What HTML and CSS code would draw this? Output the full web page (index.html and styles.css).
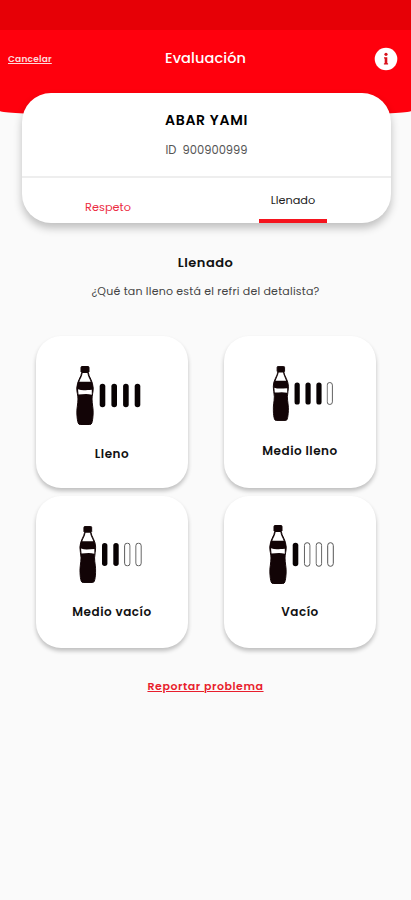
FILE: index.html
```html
<!DOCTYPE html>
<html lang="es">
<head>
    <meta charset="UTF-8">
    <meta name="viewport" content="width=device-width, initial-scale=1.0">
    <title>Evaluación</title>
    <link rel="stylesheet" href="styles.css">
</head>
<body>
    <!-- Shared icon shapes -->
    <svg class="sprite" width="0" height="0">
        <symbol id="bottle" viewBox="0 0 18 59">
            <path d="M5 1.5Q5 .5 6 .5h6q1 0 1 1v4.300l-.7.7c.2 4 4.700 8.500 4.900 15.500.1 4-1.200 7-1.200 11 0 5 1.500 10 1.100 15-.2 4-.6 7-1.300 9q-.5 1.500-2 1.500H4.200q-1.500 0-2-1.500C1.500 55 1.100 52 .9 48c-.4-5 1.100-10 1.100-15 0-4-1.300-7-1.200-11C1 15 5.500 10.500 5.700 6.500L5 5.800z" fill="#120406" stroke="#120406" stroke-width="1"/>
            <path d="M6.600 7h4.800c.3 3 2.300 5.800 3.300 8.800H3.300c1-3 3-5.800 3.300-8.800z" fill="#fff"/>
            <path d="M2 23.300c4 1.500 8 .8 13.800.500v5c-4.500-1.300-8.500-.6-13.300-.300z" fill="#fff"/>
        </symbol>
        <symbol id="bar" viewBox="0 0 7 25">
            <rect x=".7" y=".7" width="5.600" height="23.600" rx="2.800"/>
        </symbol>
    </svg>

    <div class="status-bar"></div>
    <header class="header">
        <a class="cancel" href="#">Cancelar</a>
        <h1>Evaluación</h1>
        <svg class="info" viewBox="0 0 24 24">
            <circle cx="12" cy="12" r="11.300" fill="#fff"/>
            <circle cx="12" cy="7.300" r="1.600" fill="#d9121c"/>
            <path d="M10 10.300h3.300v6h.8v1.300H9.900v-1.300h.8v-4.700H10z" fill="#d9121c"/>
        </svg>
    </header>

    <section class="profile">
        <div class="profile-info">
            <h2>ABAR YAMI</h2>
            <p>ID&nbsp; 900900999</p>
        </div>
        <nav class="tabs">
            <a class="tab" href="#">Respeto</a>
            <a class="tab active" href="#">Llenado</a>
        </nav>
    </section>

    <main>
        <h3>Llenado</h3>
        <p class="question">¿Qué tan lleno está el refri del detalista?</p>

        <div class="options">
            <button class="option full">
                <svg class="level" viewBox="0 0 65 59">
                    <use href="#bottle" x="0" y="0" width="18" height="59"/>
                    <use class="on" href="#bar" x="23" y="17" width="7" height="25"/>
                    <use class="on" href="#bar" x="34.700" y="17" width="7" height="25"/>
                    <use class="on" href="#bar" x="46.400" y="17" width="7" height="25"/>
                    <use class="on" href="#bar" x="58" y="17" width="7" height="25"/>
                </svg>
                <span>Lleno</span>
            </button>
            <button class="option half-full">
                <svg class="level" viewBox="0 0 65 59">
                    <use href="#bottle" x="0" y="0" width="18" height="59"/>
                    <use class="on" href="#bar" x="23" y="17" width="7" height="25"/>
                    <use class="on" href="#bar" x="34.700" y="17" width="7" height="25"/>
                    <use class="on" href="#bar" x="46.400" y="17" width="7" height="25"/>
                    <use class="off" href="#bar" x="58" y="17" width="7" height="25"/>
                </svg>
                <span>Medio lleno</span>
            </button>
            <button class="option half-empty">
                <svg class="level" viewBox="0 0 65 59">
                    <use href="#bottle" x="0" y="0" width="18" height="59"/>
                    <use class="on" href="#bar" x="23" y="17" width="7" height="25"/>
                    <use class="on" href="#bar" x="34.700" y="17" width="7" height="25"/>
                    <use class="off" href="#bar" x="46.400" y="17" width="7" height="25"/>
                    <use class="off" href="#bar" x="58" y="17" width="7" height="25"/>
                </svg>
                <span>Medio vacío</span>
            </button>
            <button class="option empty">
                <svg class="level" viewBox="0 0 65 59">
                    <use href="#bottle" x="0" y="0" width="18" height="59"/>
                    <use class="on" href="#bar" x="23" y="17" width="7" height="25"/>
                    <use class="off" href="#bar" x="34.700" y="17" width="7" height="25"/>
                    <use class="off" href="#bar" x="46.400" y="17" width="7" height="25"/>
                    <use class="off" href="#bar" x="58" y="17" width="7" height="25"/>
                </svg>
                <span>Vacío</span>
            </button>
        </div>

        <a class="report" href="#">Reportar problema</a>
    </main>
</body>
</html>
```

FILE: styles.css
```css
* {
    box-sizing: border-box;
}
body {
    margin: 0;
    min-height: 900px;
    background-color: #fafafa;
    font-family: Poppins, Inter, sans-serif;
    color: #111;
}
h1, h2, h3, p {
    margin: 0;
}
.sprite {
    display: block;
}
.status-bar {
    height: 30px;
    background-color: #e60006;
}
.header {
    display: grid;
    grid-template-columns: 1fr auto 1fr;
    align-items: start;
    height: 86px;
    padding: 17px 13px 0 8px;
    background-color: #ff000d;
    border-radius: 0 0 50% 50% / 0 0 5px 5px;
    color: #fff;
}
.header h1 {
    padding-left: 5px;
    font-size: 14.5px;
    line-height: 22px;
    font-weight: 500;
    letter-spacing: 0.1px;
}
.cancel {
    padding-top: 5px;
    font-size: 9px;
    line-height: 14px;
    font-weight: 600;
    letter-spacing: 0.2px;
    color: #ffd9db;
}
.info {
    justify-self: end;
    width: 24px;
    height: 24px;
}
.profile {
    width: 369px;
    height: 130px;
    margin: -23px auto 0 22px;
    position: relative;
    background-color: #fff;
    border-radius: 29px;
    box-shadow: 0 5px 8px rgba(0,0,0,0.24);
    text-align: center;
}
.profile-info {
    height: 85px;
    padding-top: 17px;
    border-bottom: 2px solid #eee;
}
.profile h2 {
    font-size: 14px;
    line-height: 20px;
    font-weight: 600;
    letter-spacing: 0.7px;
    color: #000;
}
.profile p {
    margin-top: 11px;
    font-size: 11.5px;
    line-height: 18px;
    color: #555;
}
.tabs {
    display: flex;
    justify-content: space-between;
    padding: 0 64px 0 52px;
}
.tab {
    width: 68px;
    height: 45px;
    padding-top: 20px;
    font-size: 11.3px;
    line-height: 18px;
    color: #ec2b3f;
    text-decoration: none;
}
.tab.active {
    padding-top: 13px;
    border-bottom: 4px solid #f5141e;
    color: #222;
}
main {
    padding-top: 30px;
    text-align: center;
}
main h3 {
    font-size: 13px;
    line-height: 20px;
    font-weight: 600;
    letter-spacing: 0.5px;
}
.question {
    margin-top: 9px;
    font-size: 11px;
    line-height: 18px;
    letter-spacing: 0.2px;
    color: #444;
}
.options {
    display: grid;
    grid-template-columns: 152px 152px;
    gap: 8px 36px;
    margin: 36px 35px 0 36px;
}
.option {
    display: flex;
    flex-direction: column;
    align-items: center;
    height: 152px;
    padding: 30px 0 0;
    border: none;
    border-radius: 25px;
    background-color: #fff;
    box-shadow: 0 3px 4px rgba(0,0,0,0.24);
    font: inherit;
    color: #111;
}
.option span {
    margin-top: auto;
    margin-bottom: 27px;
    font-size: 12px;
    line-height: 18px;
    font-weight: 600;
    letter-spacing: 0.5px;
}
.level {
    flex: none;
    width: 65px;
    height: 59px;
    overflow: visible;
}
.full .level {
    margin-right: 7px;
}
.full span {
    margin-bottom: 25px;
}
.half-full .level {
    width: 61.5px;
    height: 55px;
    margin-left: 6px;
}
.half-full span {
    margin-bottom: 28px;
}
.half-empty .level {
    width: 63px;
    height: 57px;
    margin-right: 3px;
}
.empty .level {
    margin-left: 3px;
    margin-top: -1px;
}
.on {
    fill: #080203;
    stroke: none;
}
.off {
    fill: #fff;
    stroke: #555;
}
.report {
    display: inline-block;
    margin-top: 29px;
    font-size: 11px;
    line-height: 18px;
    font-weight: 600;
    letter-spacing: 0.55px;
    color: #e81e2d;
}
```
